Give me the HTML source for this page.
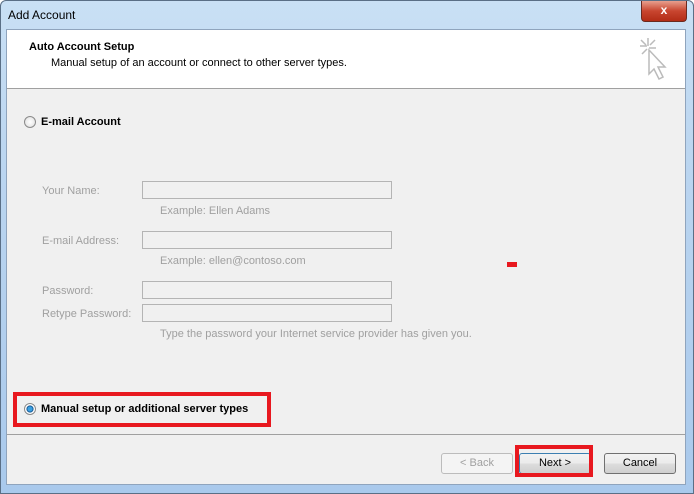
<!DOCTYPE html>
<html><head><style>
body{margin:0;width:694px;height:494px;overflow:hidden;font-family:"Liberation Sans",sans-serif;font-size:11px;}
.win{position:absolute;left:0;top:0;width:692px;height:492px;border:1px solid #5a6f86;border-radius:6px 6px 0 0;background:linear-gradient(180deg,#c9e0f5 0%,#bcd6f0 30%,#a9c9ec 100%);}
.title{position:absolute;left:7px;top:7px;font-size:12px;color:#000;}
.close{position:absolute;left:640px;top:0px;width:44px;height:20px;border:1px solid #6b2a20;border-top:none;border-radius:0 0 4px 4px;background:linear-gradient(#e8a08e,#c8452f 50%,#b32c16);color:#fff;font-weight:bold;text-align:center;font-size:12px;line-height:19px;}
.client{position:absolute;left:6px;top:29px;width:680px;height:456px;background:#f0f0f0;border:1px solid #8fa4bd;box-sizing:border-box;}
.head{position:absolute;left:0;top:0;width:678px;height:58px;background:#fff;border-bottom:1px solid #a0a0a0;}
.ab{position:absolute;font-size:11px;}
.lbl{color:#a0a0a0;position:absolute;}
.box{position:absolute;left:135px;width:250px;height:18px;border:1px solid #b4b4b4;background:#f0f0f0;box-sizing:border-box;}
.radio{position:absolute;width:10px;height:10px;border-radius:50%;border:1px solid #8a8a8a;background:radial-gradient(#fff,#ddd);}
.btn{position:absolute;top:423px;height:21px;border:1px solid #707070;border-radius:3px;background:linear-gradient(#f2f2f2,#ebebeb 50%,#dddddd 51%,#cfcfcf);box-sizing:border-box;text-align:center;line-height:19px;font-size:11px;}
.red{position:absolute;border:4px solid #e8181f;box-sizing:border-box;}
</style></head><body>
<div class="win">
<div class="title">Add Account</div>
<div class="close">x</div>
</div>
<div class="client">
<div class="head">
<div class="ab" style="left:22px;top:11px;font-weight:bold;">Auto Account Setup</div>
<div class="ab" style="left:44px;top:27px;">Manual setup of an account or connect to other server types.</div>
<svg style="position:absolute;left:628px;top:6px" width="40" height="50" viewBox="0 0 40 50"><g stroke="#bbb" stroke-width="1.5" fill="none"><path d="M13 2v8M5 10h7M14 12h7M6 4l5 5M20 4l-5 5M7 18l5-5"/><path d="M14 14l0 24 5-5 5 10 4-2-5-10 7 0z" fill="#fff"/></g></svg>
</div>
<div class="radio" style="left:17px;top:86px;"></div>
<div class="ab" style="left:34px;top:86px;font-weight:bold;">E-mail Account</div>
<div class="lbl" style="left:35px;top:155px;">Your Name:</div>
<div class="box" style="top:151px;"></div>
<div class="lbl" style="left:153px;top:175px;">Example: Ellen Adams</div>
<div class="lbl" style="left:35px;top:205px;">E-mail Address:</div>
<div class="box" style="top:201px;"></div>
<div class="lbl" style="left:153px;top:225px;">Example: ellen@contoso.com</div>
<div class="lbl" style="left:35px;top:255px;">Password:</div>
<div class="box" style="top:251px;"></div>
<div class="lbl" style="left:35px;top:278px;">Retype Password:</div>
<div class="box" style="top:274px;"></div>
<div class="lbl" style="left:153px;top:298px;">Type the password your Internet service provider has given you.</div>
<div style="position:absolute;left:500px;top:232px;width:10px;height:5px;background:#e8181f"></div>
<div class="red" style="left:6px;top:362px;width:258px;height:35px;"></div>
<div class="radio" style="left:17px;top:373px;background:radial-gradient(#3a9fe0 30%,#0c4d8a 45%,#fff 55%);"></div>
<div class="ab" style="left:34px;top:373px;font-weight:bold;">Manual setup or additional server types</div>
<div style="position:absolute;left:0;top:404px;width:678px;border-top:1px solid #a0a0a0;"></div>
<div class="btn" style="left:434px;width:72px;color:#a0a0a0;border-color:#bcbcbc;background:#f4f4f4;">&lt; Back</div>
<div class="btn" style="left:512px;width:72px;border-color:#3c7fb1;">Next &gt;</div>
<div class="red" style="left:508px;top:415px;width:78px;height:32px;"></div>
<div class="btn" style="left:597px;width:72px;">Cancel</div>
</div>
</body></html>
